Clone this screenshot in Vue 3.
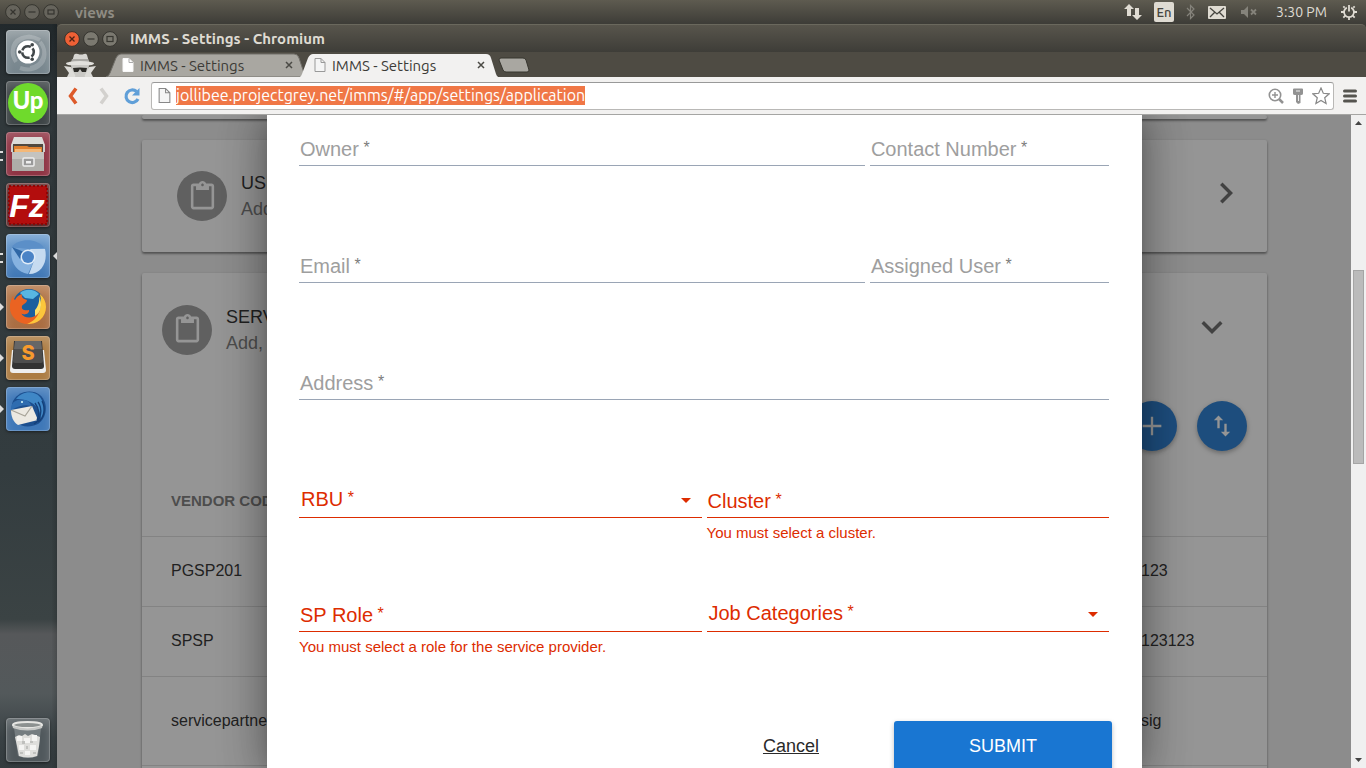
<script setup>
import { ref } from 'vue'

const url = ref('jollibee.projectgrey.net/imms/#/app/settings/application')
const vendors = [
  { code: 'PGSP201', contact: '123' },
  { code: 'SPSP', contact: '123123' },
  { code: 'servicepartner', contact: 'sig', tall: true },
  { code: '', contact: '' },
]
const form = ref({ owner: '', contact: '', email: '', user: '', address: '', rbu: '', cluster: '', role: '', jobs: '' })
</script>

<template>
  <div class="desktop">
    <header class="panel">
      <div class="wm">
        <svg v-for="k in ['close', 'min', 'max']" :key="k" class="wm-dot" viewBox="0 0 16 16">
          <circle cx="8" cy="8" r="7.4" fill="#66645c" stroke="#36352f" />
          <path v-if="k === 'close'" d="M5.5 5.5l5 5M10.5 5.5l-5 5" stroke="#35342f" stroke-width="1.2" />
          <path v-else-if="k === 'min'" d="M4.5 8h7" stroke="#35342f" stroke-width="1.2" />
          <rect v-else x="5" y="6" width="6" height="4" fill="none" stroke="#35342f" stroke-width="1.2" />
        </svg>
      </div>
      <span class="panel-title">views</span>
      <div class="indicators">
        <svg width="18" height="18" viewBox="0 0 18 18" fill="#dfdbd2"><path d="M5 1l5 5H7v7H3V6H0zM13 17l-5-5h3V5h4v7h3z" /></svg>
        <span class="lang">En</span>
        <svg width="10" height="18" viewBox="0 0 10 18" fill="none" stroke="#85837b" stroke-width="1.2"><path d="M1 5l7 7-3.5 3.500V2.500L8 6l-7 7" /></svg>
        <svg width="18" height="14" viewBox="0 0 18 14"><rect width="18" height="13" y="1" rx="1" fill="#dfdbd2" /><path d="M2 3l7 6 7-6M2 12l5-5M16 12l-5-5" fill="none" stroke="#45443e" stroke-width="1.300" /></svg>
        <svg width="26" height="14" viewBox="0 0 26 14"><path d="M3 5h3l4-4v12L6 9H3z" fill="#85837b" /><path d="M13 4.500l5 5M18 4.500l-5 5" stroke="#85837b" stroke-width="1.800" /></svg>
        <span class="clock">3:30 PM</span>
        <svg width="16" height="16" viewBox="0 0 16 16" fill="none" stroke="#dfdbd2"><path d="M5.800 3.600a5 5 0 1 0 4.400 0" stroke-width="1.800" /><path d="M8 1v6.500" stroke-width="1.800" /><path d="M3.700 3.700L2.300 2.300M12.300 3.700l1.400-1.400M3 8H0M16 8h-3M4.300 11.700l-2 2M11.700 11.700l2 2M8 13v3" stroke-width="1.800" /></svg>
      </div>
    </header>

    <div class="workspace">
      <nav class="launcher" aria-label="Launcher">
        <button class="tile t-dash" aria-label="Dash">
          <svg viewBox="0 0 44 44">
            <g fill="none" stroke="#fff" stroke-opacity=".2" stroke-width="4"><path d="M7 22C6 8 22 3 34 10M38 20c3 14-10 23-24 18M10 32C0 16 16 5 26 7M34 12c9 10 2 25-10 26" /></g>
            <circle cx="22" cy="22" r="11.500" fill="#fff" />
            <circle cx="22" cy="22" r="5.800" fill="none" stroke="#41474a" stroke-width="2.600" stroke-dasharray="10.200 2" stroke-dashoffset="5" />
            <g fill="#41474a"><circle cx="13.700" cy="22" r="1.800" /><circle cx="26.200" cy="14.800" r="1.800" /><circle cx="26.200" cy="29.200" r="1.800" /></g>
          </svg>
        </button>
        <button class="tile t-up" aria-label="Upwork">
          <svg viewBox="0 0 44 44"><circle cx="22" cy="22" r="20" fill="#6fda2c" /><text x="22" y="28" text-anchor="middle" font-family="Lato, sans-serif" font-weight="900" font-size="24" fill="#fff">Up</text></svg>
        </button>
        <button class="tile t-files running" aria-label="Files">
          <svg viewBox="0 0 44 44">
            <path d="M8 5h28l3 8v5H5v-5z" fill="#dcdcd9" /><rect x="7" y="12" width="30" height="9" fill="#51483f" />
            <path d="M8 14h13l2 1h13v6H8z" fill="#e0812f" /><path d="M9 17h26v4H9z" fill="#f3b878" />
            <path d="M5 13h2v7H5zM37 13h2v7h-2z" fill="#cfcfcc" />
            <path d="M6 20h32v19H6z" fill="#aeada9" /><path d="M6 20h32v7H6z" fill="#c4c3bf" />
            <rect x="17" y="26" width="11" height="8" rx="1" fill="#999" stroke="#eee" stroke-width="1.500" /><rect x="20" y="29" width="5" height="2.500" fill="#eee" />
          </svg>
        </button>
        <button class="tile t-fz" aria-label="FileZilla">
          <svg viewBox="0 0 44 44"><rect x="3" y="3" width="38" height="38" fill="#b30d0d" stroke="#8d0505" stroke-width="2" stroke-dasharray="2 2" /><text x="21" y="34" text-anchor="middle" font-family="Liberation Sans, sans-serif" font-weight="700" font-style="italic" font-size="32" fill="#fff">Fz</text></svg>
        </button>
        <button class="tile t-chromium running focused" aria-label="Chromium">
          <svg viewBox="0 0 44 44">
            <path d="M5 14h34l-3 6H12z" fill="#6fa0d4" />
            <path d="M6 13C12 4 32 4 38 14l-16 1z" fill="#5b8fc8" />
            <path d="M6 13c-3 12 3 25 16 27l5-11-9-1-6-8z" fill="#86b2e0" />
            <path d="M6 13l8 12 4-7z" fill="#2f67a6" />
            <path d="M39 15H24l5 9-6 16c13 0 19-13 16-25z" fill="#c6dbf0" />
            <circle cx="22" cy="23" r="7.500" fill="#dfebf7" /><circle cx="22" cy="23" r="6" fill="#4a83c6" />
          </svg>
        </button>
        <button class="tile t-firefox arrow" aria-label="Firefox">
          <svg viewBox="0 0 44 44">
            <circle cx="23" cy="20" r="16" fill="#1b5f9e" /><path d="M14 8c5-5 15-4 19 1l-6 5-8-1z" fill="#58b6e2" />
            <path d="M34 9c7 6 8 17 2 24-7 8-20 8-27 1C2 27 3 18 7 11c0 2 1 3 2 4 1-3 4-5 7-6-1 3 1 5 5 6 0 3-4 4-5 6-1 4 3 5 7 4 1 4-6 6-8 3 3 6 13 6 17 0 4-5 4-12 2-19z" fill="#ea6322" />
            <path d="M34 9c8 7 8 19 0 26-4 3-8 4-13 4 13-5 16-18 13-30z" fill="#fbc63c" />
            <path d="M29 25c3-3 5-9 4-14 4 8 2 17-4 20z" fill="#ffdf65" />
          </svg>
        </button>
        <button class="tile t-sublime arrow" aria-label="Sublime Text">
          <svg viewBox="0 0 44 44"><path d="M6 14h32l2 20q0 3-3 3H7q-3 0-3-3z" fill="#eee" /><path d="M8 5h28l2 25q0 3-3 3H9q-3 0-3-3z" fill="#333" /><path d="M9 5h26l2 20q0 2-2 2H9q-2 0-2-2z" fill="#4e4e4e" /><path d="M9 5h26l1 8H8z" fill="#666" /><text x="22" y="24" text-anchor="middle" font-family="Inter, sans-serif" font-weight="800" font-size="20" fill="#f79a2d">S</text></svg>
        </button>
        <button class="tile t-thunder arrow" aria-label="Thunderbird">
          <svg viewBox="0 0 44 44">
            <path d="M6 17C9 5 25 1 34 8c9 8 7 23-2 29-8 4-17 3-22-2z" fill="#1c4f8f" />
            <path d="M10 12c6-8 18-9 24-2 5 7 5 16 1 23C35 19 24 12 10 12z" fill="#3f87c6" />
            <path d="M5 23l21-4 6 14-20 5c-5-3-7-9-7-15z" fill="#ece9e2" /><path d="M5 23l14 6 7-10" fill="none" stroke="#a8a499" stroke-width="1.200" />
            <path d="M5 20c1-6 8-9 14-7 4 1 6 4 6 6-6-2-12 0-20 4z" fill="#2e6cb0" /><circle cx="16" cy="15" r="1" fill="#dff" />
            <path d="M32 15c5 7 3 18-4 22M36 14c4 8 2 17-4 21M29 16c5 7 4 13 2 17" fill="none" stroke="#143f78" stroke-width="1.300" />
          </svg>
        </button>
        <button class="tile t-trash" aria-label="Trash">
          <svg viewBox="0 0 44 44">
            <path d="M8 10h27l-3 28q-10 4-20 0z" fill="#9aa1a3" fill-opacity=".5" />
            <path d="M9 19l4-2 3 1 3-2 3 2 4-2 3 1 5 2-1 9-2 10q-9 3-18 0l-2-10z" fill="#dededb" />
            <g fill="#f4f4f2"><rect x="11" y="18" width="5" height="5" /><rect x="18" y="20" width="6" height="5" /><rect x="26" y="17" width="5" height="6" /><rect x="13" y="27" width="5" height="5" /><rect x="24" y="27" width="6" height="5" /><rect x="19" y="33" width="5" height="4" /></g>
            <g fill="#bfc0bd"><rect x="16" y="23" width="3" height="3" /><rect x="24" y="23" width="3" height="2" /><rect x="20" y="28" width="2" height="3" /><rect x="14" y="34" width="3" height="2" /><rect x="27" y="34" width="3" height="2" /></g>
            <ellipse cx="21.500" cy="7" rx="14.500" ry="3" fill="#8c9190" stroke="#e6e6e3" stroke-width="2" /><path d="M7 9q14.500 5 29 0" fill="none" stroke="#c6c8c6" stroke-width="2" />
          </svg>
        </button>
      </nav>

      <section class="window">
        <div class="titlebar">
          <div class="wm">
            <svg v-for="k in ['close', 'min', 'max']" :key="k" class="wm-dot" viewBox="0 0 16 16">
              <circle cx="8" cy="8" r="7.400" :fill="k === 'close' ? '#ee6035' : '#7b7970'" stroke="#34332e" />
              <path v-if="k === 'close'" d="M5.500 5.500l5 5M10.500 5.500l-5 5" stroke="#4b2214" stroke-width="1.300" />
              <path v-else-if="k === 'min'" d="M4.500 8h7" stroke="#383731" stroke-width="1.200" />
              <rect v-else x="5" y="5.500" width="6" height="5" fill="none" stroke="#383731" stroke-width="1.200" />
            </svg>
          </div>
          <h1>IMMS - Settings - Chromium</h1>
        </div>

        <div class="tabstrip">
          <svg class="spy" viewBox="0 0 34 24">
            <path d="M9 9l2-7q1-2 4-1 3 1 6 0 2-1 3 1l2 7z" fill="#d7d6d2" /><path d="M9 6h16l1 3H8z" fill="#aaa9a5" />
            <ellipse cx="17" cy="10.500" rx="14" ry="2.500" fill="#e2e1dd" /><path d="M8 12h18l-1 9-4 3h-8l-4-3z" fill="#c9c8c4" />
            <path d="M10 15q7-1 14 0l-1 4h-4l-2-3-2 3h-4z" fill="#2e2d29" /><path d="M1 13l7 1 5 10H4l2-4zM33 13l-7 1-5 10h9l-2-4z" fill="#dddcd8" />
          </svg>
          <div class="tab">
            <svg class="tab-shape" viewBox="0 0 202 24" preserveAspectRatio="none"><path d="M0 24q3-1 4-4l6-15q2-4 5-4h173q4 0 5 4l5 15q1 3 4 4z" fill="#a9a7a1" stroke="#72706a" /></svg>
            <svg class="doc" viewBox="0 0 12 14"><path d="M1 .500h6l4 4v9H1z" fill="#fff" stroke="#f7f7f7" /><path d="M7 .500v4h4" fill="none" stroke="#aaa" /></svg>
            <span>IMMS - Settings</span>
            <button class="tab-close" aria-label="Close tab"><svg viewBox="0 0 8 8"><path d="M1 1l6 6M7 1L1 7" stroke="#4b4a45" stroke-width="1.500" /></svg></button>
          </div>
          <div class="tab active">
            <svg class="tab-shape" viewBox="0 0 202 24" preserveAspectRatio="none"><path d="M0 25q3-1 4-4l6-16q2-4 5-4h173q4 0 5 4l5 16q1 3 4 4z" fill="#f2f1f0" /></svg>
            <svg class="doc" viewBox="0 0 12 14"><path d="M1 .500h6l4 4v9H1zM7 .500v4h4" fill="#f5f5f5" stroke="#999" /></svg>
            <span>IMMS - Settings</span>
            <button class="tab-close" aria-label="Close tab"><svg viewBox="0 0 8 8"><path d="M1 1l6 6M7 1L1 7" stroke="#4b4a45" stroke-width="1.500" /></svg></button>
          </div>
          <button class="newtab" aria-label="New tab"><svg viewBox="0 0 32 16"><path d="M3 1h22q2 0 3 2l3 10q0 2-2 2H8q-2 0-3-2L1 3q0-2 2-2z" fill="#a9a7a1" stroke="#37362f" /></svg></button>
        </div>

        <div class="toolbar">
          <button aria-label="Back"><svg viewBox="0 0 20 20"><path d="M12 2.500L6.500 10l5.500 7.500" fill="none" stroke="#dd5a2a" stroke-width="3.500" /></svg></button>
          <button aria-label="Forward"><svg viewBox="0 0 20 20"><path d="M8 2.500l5.500 7.500L8 17.500" fill="none" stroke="#d3d1ce" stroke-width="3.500" /></svg></button>
          <button aria-label="Reload"><svg viewBox="0 0 20 20"><path d="M14.500 5.500A6.300 6.300 0 1 0 16 13" fill="none" stroke="#609fd8" stroke-width="3.200" /><path d="M17.500 2v7.500H10z" fill="#609fd8" /></svg></button>
          <div class="omnibox">
            <svg class="doc" viewBox="0 0 12 14"><path d="M1 .500h6l4 4v9H1zM7 .500v4h4" fill="#f5f5f5" stroke="#888" /></svg>
            <input v-model="url" aria-label="Address" class="url" spellcheck="false">
            <div class="omni-icons">
              <svg width="16" height="16" viewBox="0 0 16 16" fill="none" stroke="#929292"><circle cx="7" cy="7" r="5.700" stroke-width="1.600" /><path d="M4 7h6M7 4v6" stroke-width="1.400" /><path d="M11 11l4 4" stroke-width="2.500" /></svg>
              <svg width="16" height="16" viewBox="0 0 16 16"><path d="M4 .500h8q1 0 1 1v4q0 1.500-2 1.500h-.500v8L8 16l-2-2V7H5Q3 7 3 5.500v-4q0-1 1-1z" fill="#929292" /><path d="M6 3h4M8.500 7v6" stroke="#eee" /></svg>
              <svg width="18" height="18" viewBox="0 0 18 18"><path d="M9 1l2.300 5.300 5.900.500-4.500 3.900 1.400 5.900L9 13.500l-5.100 3.100 1.400-5.900L.800 6.800l5.900-.500z" fill="#fff" stroke="#888" stroke-width="1.200" /></svg>
            </div>
          </div>
          <button class="menu" aria-label="Menu"><svg viewBox="0 0 14 14"><path d="M1.500 2h11M1.500 7h11M1.500 12h11" stroke="#55544f" stroke-width="3" stroke-linecap="round" /></svg></button>
        </div>

        <div class="viewport">
          <main class="page">
            <div class="cards">
              <div class="card stub"></div>
              <div class="card card-head closed">
                <span class="avatar"><svg viewBox="0 0 24 24"><path d="M19 2h-4.180C14.400.840 13.300 0 12 0S9.600.840 9.180 2H5c-1.100 0-2 .900-2 2v16c0 1.100.900 2 2 2h14c1.100 0 2-.900 2-2V4c0-1.100-.900-2-2-2zm-7 0c.550 0 1 .450 1 1s-.450 1-1 1-1-.450-1-1 .450-1 1-1zm7 18H5V4h2v3h10V4h2v16z" /></svg></span>
                <div class="head-text"><h2>USERS</h2><p>Add, edit, and delete users</p></div>
                <button class="chev" aria-label="Expand"><svg viewBox="0 0 24 24"><path d="M10 6L8.590 7.410 13.170 12l-4.580 4.590L10 18l6-6z" /></svg></button>
              </div>
              <div class="card open">
                <div class="card-head">
                  <span class="avatar"><svg viewBox="0 0 24 24"><path d="M19 2h-4.180C14.400.840 13.300 0 12 0S9.600.840 9.180 2H5c-1.100 0-2 .900-2 2v16c0 1.100.900 2 2 2h14c1.100 0 2-.900 2-2V4c0-1.100-.900-2-2-2zm-7 0c.550 0 1 .450 1 1s-.450 1-1 1-1-.450-1-1 .450-1 1-1zm7 18H5V4h2v3h10V4h2v16z" /></svg></span>
                  <div class="head-text"><h2>SERVICE PROVIDERS</h2><p>Add, edit, and delete service providers</p></div>
                  <button class="chev" aria-label="Collapse"><svg viewBox="0 0 24 24"><path d="M16.590 8.590L12 13.170 7.410 8.590 6 10l6 6 6-6z" /></svg></button>
                </div>
                <div class="fabs">
                  <button class="fab" aria-label="Add"><svg viewBox="0 0 24 24"><path d="M20 13h-7v7h-2v-7H4v-2h7V4h2v7h7z" /></svg></button>
                  <button class="fab" aria-label="Import or export"><svg viewBox="0 0 24 24"><path d="M9 3L5 6.990h3V14h2V6.990h3L9 3zm7 14.010V10h-2v7.010h-3L15 21l4-3.990h-3z" /></svg></button>
                </div>
                <table>
                  <thead><tr><th>VENDOR CODE</th><th class="contact"></th></tr></thead>
                  <tbody>
                    <tr v-for="(v, i) in vendors" :key="i" :class="{ tall: v.tall }"><td>{{ v.code }}</td><td>{{ v.contact }}</td></tr>
                  </tbody>
                </table>
              </div>
            </div>
          </main>

          <div class="backdrop">
            <form class="dialog" @submit.prevent>
              <div class="row wide-narrow">
                <div class="field"><label for="owner">Owner <sup>*</sup></label><input id="owner" v-model="form.owner"></div>
                <div class="field"><label for="contact">Contact Number <sup>*</sup></label><input id="contact" v-model="form.contact"></div>
              </div>
              <div class="row wide-narrow">
                <div class="field"><label for="email">Email <sup>*</sup></label><input id="email" v-model="form.email"></div>
                <div class="field"><label for="user">Assigned User <sup>*</sup></label><input id="user" v-model="form.user"></div>
              </div>
              <div class="row">
                <div class="field"><label for="address">Address <sup>*</sup></label><input id="address" v-model="form.address"></div>
              </div>
              <div class="row halves">
                <div class="field select invalid">
                  <label for="rbu">RBU <sup>*</sup></label><select id="rbu" v-model="form.rbu"><option value=""></option></select>
                  <svg class="caret" viewBox="0 0 10 5"><path d="M0 0h10L5 5z" /></svg>
                </div>
                <div class="field invalid"><label for="cluster">Cluster <sup>*</sup></label><input id="cluster" v-model="form.cluster"><p class="error">You must select a cluster.</p></div>
              </div>
              <div class="row halves">
                <div class="field invalid"><label for="role">SP Role <sup>*</sup></label><input id="role" v-model="form.role"><p class="error">You must select a role for the service provider.</p></div>
                <div class="field select invalid">
                  <label for="jobs">Job Categories <sup>*</sup></label><select id="jobs" v-model="form.jobs"><option value=""></option></select>
                  <svg class="caret" viewBox="0 0 10 5"><path d="M0 0h10L5 5z" /></svg>
                </div>
              </div>
              <div class="actions"><button type="button" class="cancel">Cancel</button><button type="submit" class="submit">SUBMIT</button></div>
            </form>
          </div>

          <div class="scrollbar">
            <svg viewBox="0 0 7 4"><path d="M0 4h7L3.500 0z" /></svg>
            <div class="track"><div class="thumb"></div></div>
            <svg viewBox="0 0 7 4"><path d="M0 0h7L3.500 4z" /></svg>
          </div>
        </div>
      </section>
    </div>
  </div>
</template>

<style>
html, body { margin: 0; overflow: hidden; }
</style>

<style scoped>
* { box-sizing: border-box; }
button { border: 0; padding: 0; background: none; font: inherit; color: inherit; }
h1, h2, p { margin: 0; font-weight: 400; }
svg { display: block; flex: none; }

.desktop { display: flex; flex-direction: column; height: 100vh; overflow: hidden; font-family: "Liberation Sans", Arial, sans-serif; }

.panel, .titlebar, .tabstrip { font-family: Ubuntu, "Noto Sans", sans-serif; }
.panel { flex: none; display: flex; align-items: center; height: 24px; padding: 0 9px 0 5px; background: linear-gradient(#5e5b50, #3d3c37); color: #dfdbd2; }
.wm { display: flex; gap: 3px; }
.wm-dot { width: 16px; height: 16px; }
.panel-title { margin-left: 16px; font-size: 15px; font-weight: 700; color: #8f8c83; }
.indicators { margin-left: auto; display: flex; align-items: center; gap: 12px; font-size: 14px; }
.lang { width: 20px; height: 20px; border-radius: 2px; background: #dfdbd2; color: #45443e; font-size: 13px; font-weight: 500; line-height: 20px; text-align: center; }
.clock { min-width: 53px; white-space: nowrap; }

.workspace { flex: 1; min-height: 0; display: flex; background: #3d3c37; }
.launcher { flex: none; width: 57px; display: flex; flex-direction: column; gap: 7px; padding: 6px 7px 6px 6px; background: linear-gradient(90deg, rgba(0,0,0,0) 90%, rgba(0,0,0,.15)), linear-gradient(#22292c, #30383b 12%, #333c3f 60%, #3b4344 80%, #56585a 82%, #53595b 90%, #394144 96%, #333b3e); }
.tile { position: relative; width: 44px; height: 44px; border-radius: 4px; box-shadow: inset 0 0 0 1px rgba(255,255,255,.2), inset 0 6px 10px rgba(255,255,255,.2), 0 1px 3px rgba(0,0,0,.5); }
.tile svg { width: 44px; height: 44px; }
.t-dash { background: linear-gradient(#899499, #76858d); }
.t-up { background: #3d4446; }
.t-files { background: #8f3444; }
.t-fz { background: #5c2a2a; }
.t-chromium { background: linear-gradient(#6f9fd0, #3f76b4); }
.t-firefox, .t-sublime { background: linear-gradient(#b5794c, #a96d42); }
.t-sublime { background: #ac7c43; }
.t-thunder { background: #3f78b8; }
.t-trash { margin-top: auto; background: #50585c; }
.running::before { content: ""; position: absolute; left: -6px; top: 19px; width: 3px; height: 6px; border: solid #dcdcdc; border-width: 2px 0; }
.arrow::before { content: ""; position: absolute; left: -6px; top: 18px; border: 4px solid transparent; border-left-color: #dcdcdc; border-right: 0; }
.focused::after { content: ""; position: absolute; right: -7px; top: 18px; border: 4px solid transparent; border-right-color: #dcdcdc; border-left: 0; }

.window { flex: 1; min-width: 0; display: flex; flex-direction: column; }
.titlebar { flex: none; height: 28px; display: flex; align-items: center; padding-left: 7px; border-top: 1px solid #6a685d; border-radius: 5px 5px 0 0; background: linear-gradient(#58554c, #3e3d38); }
.titlebar h1 { margin-left: 12px; font-size: 15px; font-weight: 700; color: #dfdbd2; }
.tabstrip { flex: none; height: 25px; display: flex; align-items: flex-end; padding-left: 6px; background: #4e4b43; }
.spy { width: 34px; height: 24px; margin-right: 9px; }
.tab { position: relative; width: 202px; height: 24px; display: flex; align-items: center; padding: 0 15px 0 16px; font-size: 15px; color: #3c3b37; }
.tab.active { z-index: 1; margin-left: -10px; }
.tab-shape { position: absolute; left: 0; top: 0; width: 100%; height: 24px; }
.tab .doc, .tab span, .tab-close { position: relative; }
.doc { width: 12px; height: 14px; }
.tab span { margin-left: 6px; white-space: nowrap; }
.tab-close { margin-left: auto; }
.tab-close svg { width: 8px; height: 8px; }
.newtab { align-self: center; margin-left: -2px; }
.newtab svg { width: 32px; height: 16px; }

.toolbar { flex: none; height: 38px; display: flex; align-items: center; gap: 9px; padding: 0 9px 0 7px; background: #f2f1f0; border-bottom: 1px solid #a5a5a3; }
.toolbar button svg { width: 20px; height: 20px; }
.omnibox { flex: 1; min-width: 0; height: 28px; display: flex; align-items: center; padding: 0 3px 0 6px; border: 1px solid #b9b8b6; border-top-color: #999; border-radius: 3px; background: #fff; }
.omnibox .doc { width: 13px; height: 15px; }
.url { width: 409px; height: 19px; margin-left: 5px; padding: 0; border: 0; outline: 0; background: #f07746; color: #fff; font: 16px/19px Ubuntu, "Noto Sans", sans-serif; }
.omni-icons { margin-left: auto; display: flex; align-items: center; gap: 6px; }
.toolbar .menu svg { width: 14px; height: 14px; }

.viewport { position: relative; flex: 1; min-height: 0; display: flex; overflow: hidden; }
.page { flex: 1; min-width: 0; overflow: hidden; padding: 0 84px 0 85px; background: #eee; }
.cards { display: flex; flex-direction: column; gap: 21px; }
.card { background: #fff; border-radius: 2px; box-shadow: 0 1px 3px rgba(0,0,0,.3), 0 2px 2px rgba(0,0,0,.3); }
.stub { height: 4px; }
.card-head { display: flex; align-items: center; height: 113px; padding: 0 34px 0 20px; }
.closed { height: 112px; padding: 0 20px 0 35px; }
.avatar { width: 50px; height: 50px; border-radius: 50%; background: #999; display: grid; place-items: center; }
.avatar svg { width: 31px; height: 31px; fill: #fff; }
.head-text { margin-left: 14px; font-size: 18px; line-height: 26px; color: #212121; }
.head-text h2 { font-size: 18px; }
.head-text p { color: #757575; }
.chev { margin: 0 0 6px auto; }
.chev svg { width: 42px; height: 42px; fill: #616161; }
.fabs { display: flex; justify-content: flex-end; gap: 20px; padding: 15px 20px; }
.fab { width: 50px; height: 50px; border-radius: 50%; background: #1976d2; display: grid; place-items: center; box-shadow: 0 2px 5px rgba(0,0,0,.35); }
.fab svg { width: 28px; height: 28px; fill: #fff; }
table { width: 100%; border-collapse: collapse; table-layout: fixed; font-size: 16px; color: #212121; }
th, td { height: 70px; padding: 0 0 0 29px; border-bottom: 1px solid #ddd; text-align: left; white-space: nowrap; }
th { font-size: 15px; color: #757575; }
.contact { width: 155px; }
.tall td { height: 89px; }

.backdrop { position: absolute; inset: 0 15px 0 0; display: flex; justify-content: center; background: rgba(33,33,33,.48); }
.dialog { width: 875px; min-height: 100%; margin-left: 1px; padding: 15px 33px 0 32px; background: #fff; color: #2a2a2a; box-shadow: 0 11px 15px -7px rgba(0,0,0,.2), 0 0 38px 3px rgba(0,0,0,.3), 0 9px 46px 8px rgba(0,0,0,.12); }
.row { display: grid; grid-template-columns: 1fr; column-gap: 5px; align-items: start; height: 117px; }
.wide-narrow { grid-template-columns: 71fr 30fr; }
.halves { grid-template-columns: 1fr 1fr; height: 114px; }
.field { display: grid; grid-template-columns: 1fr; grid-template-rows: 36px; }
.halves .field { grid-template-rows: 37px; }
.field label, .field input, .field select, .caret { grid-area: 1 / 1; }
.field label { align-self: end; padding: 0 0 5px 1px; font-size: 20px; line-height: 24px; color: #9e9e9e; pointer-events: none; z-index: 1; white-space: nowrap; }
.field sup { font-size: 16px; line-height: 0; vertical-align: 3px; color: #7c7c7c; margin-left: -1px; }
.field input, .field select { width: 100%; min-width: 0; appearance: none; border: 0; border-bottom: 1px solid #9aa5b5; border-radius: 0; background: none; outline: 0; padding: 0; font-size: 20px; }
.field.select label { padding: 0 0 7px 2px; }
.invalid label, .invalid sup { color: #dd2c00; }
.invalid input, .invalid select { border-bottom-color: #dd2c00; }
.caret { width: 10px; height: 5px; justify-self: end; align-self: center; margin: 2px 11px 0 0; fill: #dd2c00; }
.error { padding-top: 6px; font-size: 15px; line-height: 18px; color: #dd2c00; }
.actions { display: flex; justify-content: flex-end; gap: 75px; margin: 12px -3px 0 0; font-size: 18px; }
.cancel { text-decoration: underline; }
.submit { width: 218px; height: 50px; border-radius: 3px; background: #1976d2; color: #fff; box-shadow: 0 2px 5px rgba(0,0,0,.26); }

.scrollbar { flex: none; width: 15px; display: flex; flex-direction: column; align-items: center; padding: 6px 0; background: #f0f0f0; }
.scrollbar svg { width: 7px; height: 4px; fill: #444; }
.track { flex: 1; width: 11px; padding-top: 145px; }
.thumb { height: 194px; border: 1px solid #a5a5a5; background: #bbb; }
</style>
